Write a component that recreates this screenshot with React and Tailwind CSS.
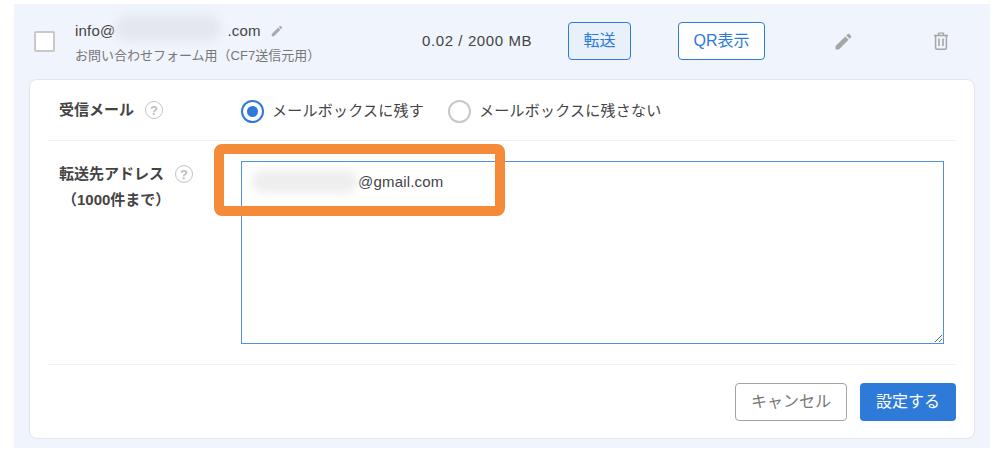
function EditIcon({ className }) {
  return (
    <svg viewBox="0 0 24 24" className={className} fill="currentColor">
      <path d="M3 17.25V21h3.75L17.81 9.94l-3.75-3.75L3 17.25zM20.71 7.04a.996.996 0 0 0 0-1.41l-2.34-2.34a.996.996 0 0 0-1.41 0l-1.83 1.83 3.75 3.75 1.83-1.83z" />
    </svg>
  )
}

function TrashIcon({ className }) {
  return (
    <svg viewBox="0 0 16 18" className={className} fill="none" stroke="currentColor">
      <path d="M1 3.5h14" strokeWidth="1.6" />
      <path d="M5.5 3V1.2h5V3" strokeWidth="1.3" />
      <path d="M2.6 3.5v12.2c0 .9.6 1.5 1.5 1.5h7.8c.9 0 1.5-.6 1.5-1.5V3.5" strokeWidth="1.5" />
      <path d="M6 6.5v7.5M10 6.5v7.5" strokeWidth="1.6" />
    </svg>
  )
}

function Help() {
  return (
    <span className="flex h-[18px] w-[18px] items-center justify-center rounded-full border-[1.5px] border-[#c4c4c4] text-[13px] font-bold leading-none text-[#bdbdbd]">
      ?
    </span>
  )
}

function Radio({ checked, label }) {
  return (
    <label className="flex items-center gap-2">
      {checked ? (
        <span className="flex h-[23px] w-[23px] items-center justify-center rounded-full border-2 border-[#2d7ad9]">
          <span className="h-[11px] w-[11px] rounded-full bg-[#2d7ad9]"></span>
        </span>
      ) : (
        <span className="h-[23px] w-[23px] rounded-full border-2 border-[#c8c8c8] bg-white"></span>
      )}
      <span className="text-[15px] tracking-[0.25px] text-[#444]">{label}</span>
    </label>
  )
}

export default function App() {
  return (
    <div className="h-[450px] w-[1000px] overflow-hidden bg-white pt-[4px] pl-[14px] font-['Liberation_Sans','Noto_Sans_CJK_JP',sans-serif]">
      <div className="h-[444px] w-[976px] bg-[#f0f4fd] pl-[15px]">
        <div className="flex h-[75px] items-center">
          <span className="ml-[5px] h-[21px] w-[21px] rounded-[2px] border-2 border-[#c9c9c9] bg-white"></span>
          <div className="relative mt-[3px] ml-[20px] w-[300px]">
            <div className="flex items-center text-[15px] leading-[20px] tracking-[0.2px] text-[#444]">
              info@<span className="w-[112px]"></span>.com
              <EditIcon className="ml-[9px] h-[14px] w-[14px] text-[#aaa]" />
            </div>
            <div className="mt-[6px] text-[13px] leading-[18px] text-[#777]">お問い合わせフォーム用（CF7送信元用）</div>
            <span className="absolute top-[-6px] left-[40px] h-[26px] w-[106px] rounded-full bg-[#e4e7ee] blur-[4px]"></span>
          </div>
          <span className="ml-[47px] w-[146px] text-[15px] tracking-[0.6px] text-[#444]">0.02 / 2000 MB</span>
          <button className="-mt-[2px] h-[38px] w-[63px] rounded-[4px] border border-[#2d7ad9] bg-[#e8f0fa] text-[16px] text-[#2d7ad9]">転送</button>
          <button className="-mt-[2px] ml-[47px] h-[38px] w-[87px] rounded-[4px] border border-[#2d7ad9] bg-white text-[16px] text-[#2d7ad9]">QR表示</button>
          <EditIcon className="-mt-[1px] ml-[68px] h-[21px] w-[21px] text-[#a6a6a6]" />
          <TrashIcon className="-mt-[1px] ml-[79px] h-[18px] w-[16px] text-[#a6a6a6]" />
        </div>

        <div className="relative h-[360px] w-[946px] rounded-[8px] border border-[#e3e6ec] bg-white px-[18px]">
          <div className="flex h-[61px] items-center border-b border-[#f1f1f1]">
            <div className="flex w-[193px] items-center gap-[11px] pl-[11px]">
              <span className="text-[15px] font-bold text-[#444]">受信メール</span>
              <Help />
            </div>
            <div className="mt-[3px] flex gap-[24px]">
              <Radio checked label="メールボックスに残す" />
              <Radio label="メールボックスに残さない" />
            </div>
          </div>

          <div className="flex h-[224px] border-b border-[#f1f1f1] pt-[20px]">
            <div className="w-[193px] pl-[11px] text-[15px] font-bold leading-[26px] text-[#444]">
              <div className="flex items-center gap-[11px]">
                転送先アドレス
                <Help />
              </div>
              <div className="pl-[3px]">（1000件まで）</div>
            </div>
            <textarea
              readOnly
              defaultValue={'                        @gmail.com'}
              className="h-[183px] w-[703px] rounded-none border border-[#4f8fe6] px-[12px] py-[10px] text-[15px] leading-[20px] tracking-[0.17px] text-[#444] outline-none"
            ></textarea>
          </div>

          <div className="flex justify-end gap-[13px] pt-[18px]">
            <button className="h-[38px] w-[112px] rounded-[4px] border border-[#a3a3a3] bg-white text-[16px] text-[#777]">キャンセル</button>
            <button className="h-[38px] w-[96px] rounded-[4px] bg-[#2d7ad9] text-[16px] text-white">設定する</button>
          </div>

          {/* blur + annotation on top of the form */}
          <span className="absolute top-[90px] left-[222px] h-[23px] w-[106px] rounded-full bg-[#eeeeee] blur-[4px]"></span>
          <div className="absolute top-[64px] left-[184px] h-[72px] w-[291px] rounded-[8px] border-[10px] border-[#f58b38]"></div>
        </div>
      </div>
    </div>
  )
}
